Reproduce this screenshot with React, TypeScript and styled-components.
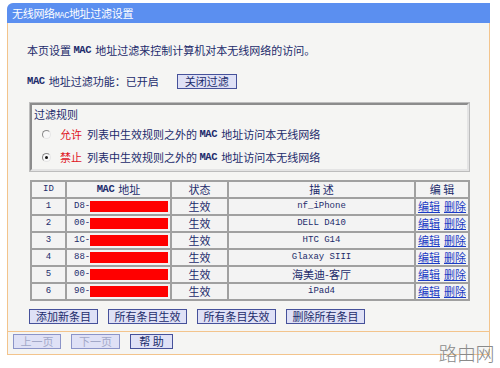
import * as React from "react";
import styled, { createGlobalStyle } from "styled-components";

const GlobalStyle = createGlobalStyle`
  html, body {
    margin: 0;
    padding: 0;
    background: #ffffff;
  }
  body {
    font-family: "Noto Sans CJK SC", "DejaVu Sans", sans-serif;
    font-size: 11px;
    line-height: 13px;
    color: #1c2b6b;
  }
`;

const Page = styled.div`
  position: relative;
  width: 500px;
  height: 368px;
  padding: 3px 0 0 7px;
  box-sizing: border-box;
`;

const Panel = styled.div`
  width: 483px;
  height: 352px;
  box-sizing: border-box;
  background: #f5f5f3;
  border-left: 1px solid #f3c48c;
  border-right: 1px solid #f3c48c;
  border-bottom: 1px solid #f3c48c;
  border-top-left-radius: 7px;
  display: flex;
  flex-direction: column;
`;

const TitleBar = styled.div`
  height: 20px;
  line-height: 20px;
  background: #5b8ff0;
  color: #ffffff;
  padding-left: 5px;
  border-top-left-radius: 6px;
  font-size: 11px;
  letter-spacing: -0.3px;
  margin: 0 -1px;
`;

const Body = styled.div`
  padding: 20px 0 0 19px;
  display: flex;
  flex-direction: column;
`;

const Line = styled.div<{ $top?: number }>`
  display: flex;
  align-items: center;
  height: 15px;
  margin-top: ${(p) => p.$top ?? 0}px;
  white-space: nowrap;
`;

const Latin = styled.span<{ $thin?: boolean }>`
  font-family: "Liberation Mono", "DejaVu Sans Mono", monospace;
  font-size: ${(p) => (p.$thin ? "8.5px" : "10.5px")};
  font-weight: ${(p) => (p.$thin ? "normal" : "bold")};
  margin: ${(p) => (p.$thin ? "0" : "0 4px 0 0")};
  letter-spacing: -0.4px;
`;

const Btn = styled.button<{ $w: number; $disabled?: boolean }>`
  width: ${(p) => p.$w}px;
  height: 15px;
  padding: 0;
  box-sizing: border-box;
  font-family: "Noto Sans CJK SC", sans-serif;
  font-size: 11px;
  line-height: 13px;
  color: ${(p) => (p.$disabled ? "#a2a8c8" : "#1c2b6b")};
  background: #dfe1f6;
  border: 1px solid ${(p) => (p.$disabled ? "#8b94c8" : "#46519a")};
  border-radius: 0;
  cursor: pointer;
`;

const RuleBox = styled.div`
  margin: 14px 0 0 3px;
  width: 439px;
  height: 68px;
  box-sizing: border-box;
  border: 2px solid #8c8c8c;
  border-right-color: #e4e4e4;
  border-bottom-color: #e4e4e4;
  outline: 1px solid #bdbdbd;
  padding: 3px 0 0 2px;
  display: flex;
  flex-direction: column;
`;

const RuleRow = styled.label<{ $top: number }>`
  display: flex;
  align-items: center;
  height: 14px;
  margin-top: ${(p) => p.$top}px;
  padding-left: 8px;
  white-space: nowrap;
`;

const Radio = styled.span<{ $on?: boolean }>`
  width: 9px;
  height: 9px;
  border-radius: 50%;
  box-sizing: border-box;
  border: 1px solid #8a8a8a;
  border-right-color: #e6e6e6;
  border-bottom-color: #e6e6e6;
  background: #f8f8f8;
  margin-right: 9px;
  display: flex;
  align-items: center;
  justify-content: center;
  &::after {
    content: "";
    width: 3px;
    height: 3px;
    border-radius: 50%;
    background: ${(p) => (p.$on ? "#111" : "transparent")};
  }
`;

const Red = styled.span`
  color: #e0141e;
  margin-right: 5px;
`;

const Table = styled.table`
  margin: 9px 0 0 3px;
  width: 438px;
  border-collapse: collapse;
  table-layout: fixed;
  border: 2px solid #8e8e8e;
  background: #f3f3f3;
`;

const Cell = styled.td<{ $left?: boolean }>`
  height: 15px;
  padding: 0;
  border: 2px solid #a0a0a0;
  padding-left: ${(p) => (p.$left ? "7px" : "0")};
  white-space: nowrap;
  overflow: hidden;
  line-height: 13px;
  font-weight: normal;
  vertical-align: middle;
`;

const CellInner = styled.div<{ $left?: boolean }>`
  height: 15px;
  display: flex;
  align-items: center;
  justify-content: ${(p) => (p.$left ? "flex-start" : "center")};
  overflow: hidden;
`;

const Mono = styled.span`
  font-family: "Liberation Mono", "DejaVu Sans Mono", monospace;
  font-size: 9px;
`;

const Mask = styled.span`
  display: block;
  width: 78px;
  height: 11px;
  background: #ff0000;
`;

const Link = styled.a`
  color: #1b3bc4;
  text-decoration: underline;
  margin: 0 2px;
`;

const ActionRow = styled.div`
  display: flex;
  gap: 10px;
  margin: 8px 0 0 2px;
`;

const Divider = styled.div`
  height: 0;
  border-top: 1px solid #f3c48c;
  margin: 7px 0 0 0;
`;

const NavRow = styled.div`
  display: flex;
  gap: 10px;
  padding: 2px 0 0 5px;
`;

const Watermark = styled.div`
  position: absolute;
  right: 6px;
  bottom: 3px;
  font-family: "Noto Sans CJK SC", sans-serif;
  font-size: 19px;
  line-height: 24px;
  font-weight: 300;
  color: #8a8a8a;
  letter-spacing: -0.5px;
`;

const rows = [
  { id: 1, mac: "D8-", desc: "nf_iPhone" },
  { id: 2, mac: "00-", desc: "DELL D410" },
  { id: 3, mac: "1C-", desc: "HTC G14" },
  { id: 4, mac: "88-", desc: "Glaxay SIII" },
  { id: 5, mac: "00-", desc: "海美迪-客厅" },
  { id: 6, mac: "90-", desc: "iPad4" },
];

const App = () => {
  return (
    <Page>
      <GlobalStyle />
      <Panel>
        <TitleBar>
          无线网络<Latin $thin>MAC</Latin>地址过滤设置
        </TitleBar>
        <Body>
          <Line>
            本页设置&nbsp;<Latin>MAC</Latin>地址过滤来控制计算机对本无线网络的访问。
          </Line>
          <Line $top={16}>
            <Latin>MAC</Latin>地址过滤功能：已开启
            <span style={{ width: 18 }} />
            <Btn $w={60}>关闭过滤</Btn>
          </Line>
          <RuleBox>
            <div>过滤规则</div>
            <RuleRow $top={6}>
              <Radio />
              <Red>允许</Red>列表中生效规则之外的&nbsp;<Latin>MAC</Latin>地址访问本无线网络
            </RuleRow>
            <RuleRow $top={9}>
              <Radio $on />
              <Red>禁止</Red>列表中生效规则之外的&nbsp;<Latin>MAC</Latin>地址访问本无线网络
            </RuleRow>
          </RuleBox>
          <Table>
            <colgroup>
              <col style={{ width: 35 }} />
              <col style={{ width: 105 }} />
              <col style={{ width: 57 }} />
              <col style={{ width: 187 }} />
              <col style={{ width: 54 }} />
            </colgroup>
            <thead>
              <tr>
                <Cell as="th">
                  <CellInner>
                    <Mono>ID</Mono>
                  </CellInner>
                </Cell>
                <Cell as="th">
                  <CellInner>
                    <Latin>MAC</Latin>地址
                  </CellInner>
                </Cell>
                <Cell as="th">
                  <CellInner>状态</CellInner>
                </Cell>
                <Cell as="th">
                  <CellInner>描 述</CellInner>
                </Cell>
                <Cell as="th">
                  <CellInner>编 辑</CellInner>
                </Cell>
              </tr>
            </thead>
            <tbody>
              {rows.map((r) => (
                <tr key={r.id}>
                  <Cell>
                    <CellInner>
                      <Mono>{r.id}</Mono>
                    </CellInner>
                  </Cell>
                  <Cell $left>
                    <CellInner $left>
                      <Mono>{r.mac}</Mono>
                      <Mask />
                    </CellInner>
                  </Cell>
                  <Cell>
                    <CellInner>生效</CellInner>
                  </Cell>
                  <Cell>
                    <CellInner>
                      {/[^\x00-\x7f]/.test(r.desc) ? r.desc : <Mono>{r.desc}</Mono>}
                    </CellInner>
                  </Cell>
                  <Cell>
                    <CellInner>
                      <Link>编辑</Link>
                      <Link>删除</Link>
                    </CellInner>
                  </Cell>
                </tr>
              ))}
            </tbody>
          </Table>
          <ActionRow>
            <Btn $w={69}>添加新条目</Btn>
            <Btn $w={79}>所有条目生效</Btn>
            <Btn $w={79}>所有条目失效</Btn>
            <Btn $w={79}>删除所有条目</Btn>
          </ActionRow>
        </Body>
        <Divider />
        <NavRow>
          <Btn $w={48} $disabled>上一页</Btn>
          <Btn $w={49} $disabled>下一页</Btn>
          <Btn $w={43}>帮 助</Btn>
        </NavRow>
      </Panel>
      <Watermark>路由网</Watermark>
    </Page>
  );
};

export default App;
